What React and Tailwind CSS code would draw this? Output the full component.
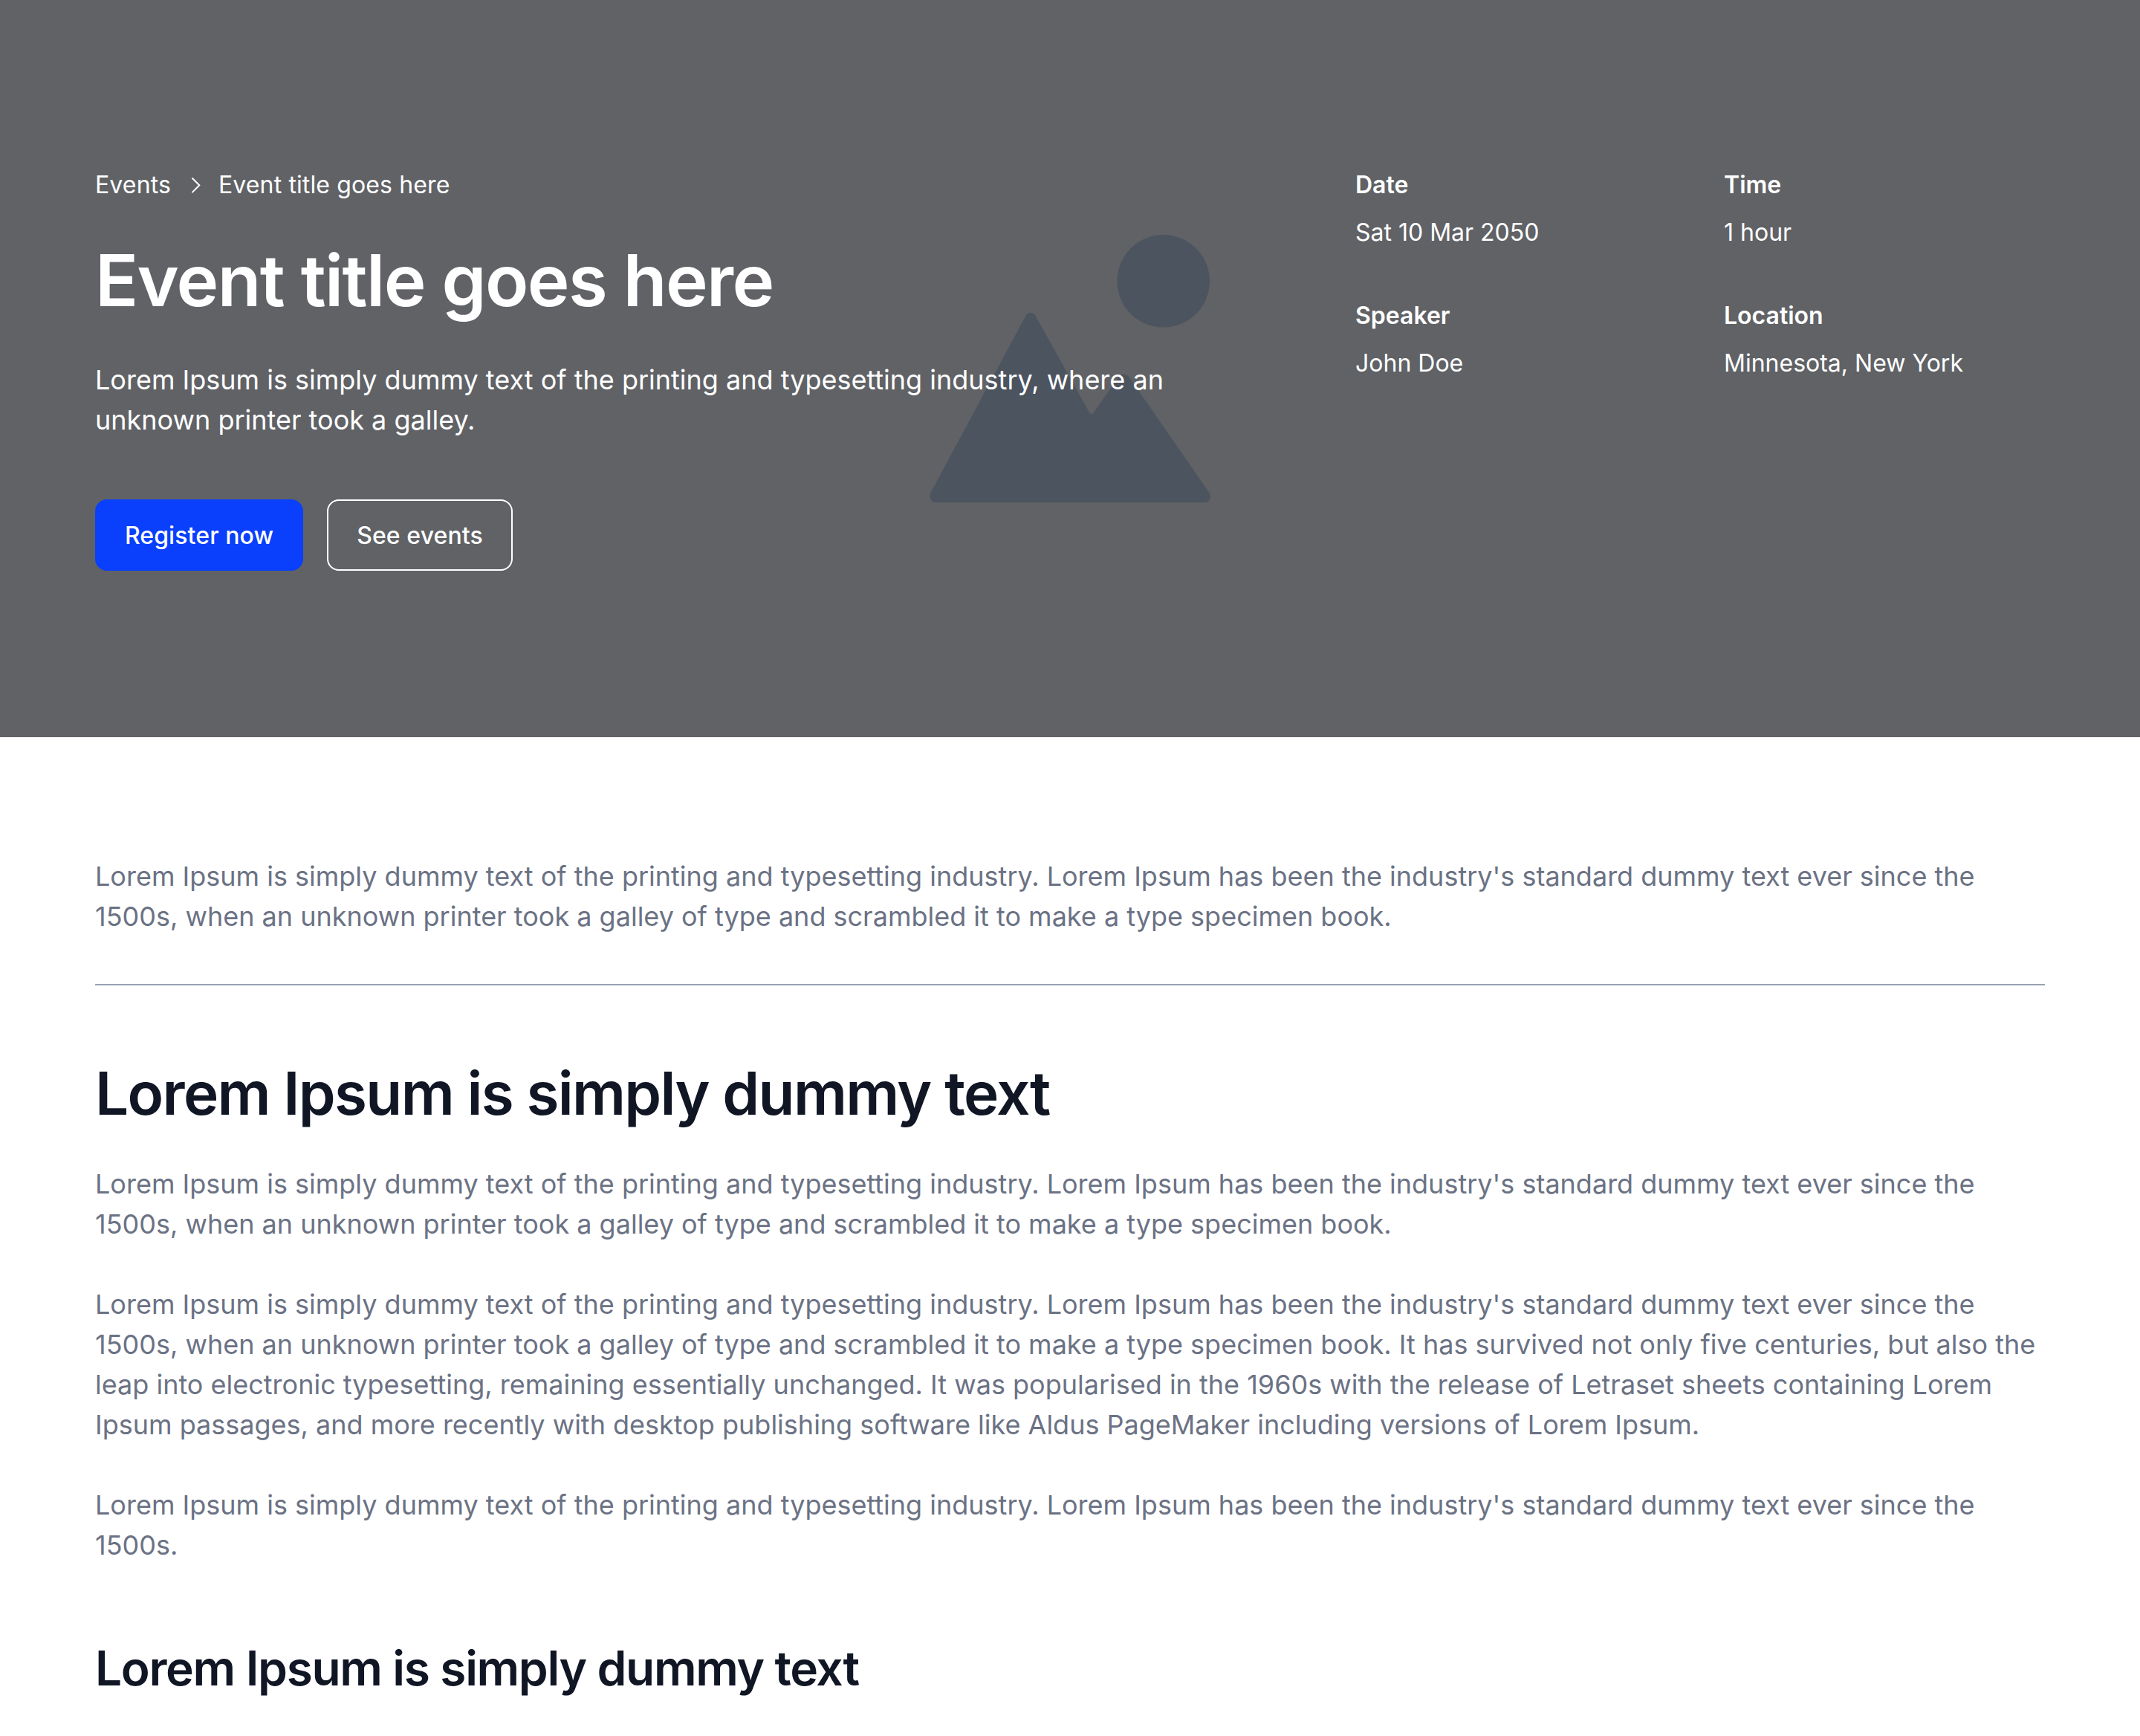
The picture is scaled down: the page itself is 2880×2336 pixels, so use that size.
const details = [
  { label: 'Date', value: 'Sat 10 Mar 2050' },
  { label: 'Time', value: '1 hour' },
  { label: 'Speaker', value: 'John Doe' },
  { label: 'Location', value: 'Minnesota, New York' },
];

const intro =
  "Lorem Ipsum is simply dummy text of the printing and typesetting industry. Lorem Ipsum has been the industry's standard dummy text ever since the 1500s, when an unknown printer took a galley of type and scrambled it to make a type specimen book.";

const paragraphs = [
  intro,
  `${intro} It has survived not only five centuries, but also the leap into electronic typesetting, remaining essentially unchanged. It was popularised in the 1960s with the release of Letraset sheets containing Lorem Ipsum passages, and more recently with desktop publishing software like Aldus PageMaker including versions of Lorem Ipsum.`,
  "Lorem Ipsum is simply dummy text of the printing and typesetting industry. Lorem Ipsum has been the industry's standard dummy text ever since the 1500s.",
];

function ChevronIcon() {
  return (
    <svg
      className="mx-4 size-8"
      viewBox="0 0 32 32"
      fill="none"
      stroke="currentColor"
      strokeWidth="2"
    >
      <path d="M12.500 6.500 22.300 16.300l-9.800 9.800" />
    </svg>
  );
}

function PlaceholderImage() {
  return (
    <div className="absolute inset-0 flex items-start justify-center pt-[316px]">
      <svg width="380" height="360" viewBox="0 0 380 360" fill="#4c545f">
        <circle cx="315.7" cy="62.3" r="62.3" />
        <path d="M131 108 Q136.700 101 143 108 L216 239 Q219 243 222 239 L255 192 Q262 183 270 192 L378 348 Q381 357 373 360 H7 Q0 357 2 348 Z" />
      </svg>
    </div>
  );
}

function EventHeader() {
  return (
    <header className="relative bg-[#606266] text-white">
      <PlaceholderImage />
      <div className="relative flex justify-between px-32 py-56">
        <div className="w-[1536px]">
          <nav className="flex items-center text-[32px] leading-[49px] tracking-[0.004em]">
            <a href="#">Events</a>
            <ChevronIcon />
            <span>Event title goes here</span>
          </nav>

          <h1 className="mt-[47px] text-[96px] leading-[115px] font-semibold tracking-[-0.0165em]">
            Event title goes here
          </h1>
          <p className="mt-[49px] text-4xl leading-[54px]">
            Lorem Ipsum is simply dummy text of the printing and typesetting industry, where an
            unknown printer took a galley.
          </p>

          <div className="mt-20 flex gap-8 text-[32px] leading-[48px] font-medium tracking-[0.003em]">
            <button className="h-24 w-[280px] rounded-2xl bg-[#0a3ffc] pt-0.5">
              Register now
            </button>
            <button className="h-24 w-[250px] rounded-2xl border-2 border-white pt-0.5">
              See events
            </button>
          </div>
        </div>

        <dl className="grid w-[928px] grid-cols-2 content-start gap-x-16 gap-y-[63px] text-[32px] leading-[49px]">
          {details.map((item) => (
            <div key={item.label}>
              <dt className="font-semibold">{item.label}</dt>
              <dd className="mt-[15px]">{item.value}</dd>
            </div>
          ))}
        </dl>
      </div>
    </header>
  );
}

function App() {
  return (
    <div className="h-[2336px] overflow-hidden bg-white font-['Inter',sans-serif]">
      <EventHeader />

      <main className="px-32 pt-40 text-4xl leading-[54px] text-[#6b7284]">
        <p>{intro}</p>
        <hr className="mt-16 border-t-2 border-[#9aa2b1]" />

        <h2 className="mt-24 text-[80px] leading-[98px] font-semibold tracking-[-0.021em] text-[#111625]">
          Lorem Ipsum is simply dummy text
        </h2>
        <div className="mt-[46px] space-y-[54px]">
          {paragraphs.map((text) => (
            <p key={text}>{text}</p>
          ))}
        </div>

        <h3 className="mt-24 text-[64px] leading-[85px] font-semibold tracking-[-0.021em] text-[#111625]">
          Lorem Ipsum is simply dummy text
        </h3>
      </main>
    </div>
  );
}

export default App;
